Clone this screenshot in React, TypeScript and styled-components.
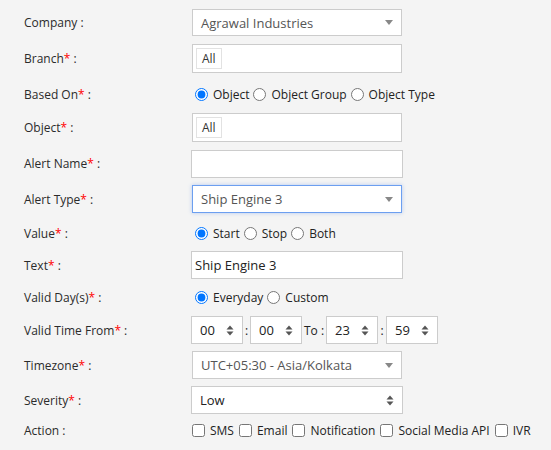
import { ReactNode } from "react";
import styled, { createGlobalStyle } from "styled-components";

const GlobalStyle = createGlobalStyle`
  html, body {
    margin: 0;
    background: #f4f4f4;
  }
  body {
    font-family: "Open Sans", "Liberation Sans", sans-serif;
    font-size: 12px;
    color: #333;
  }
`;

const Form = styled.div`
  padding: 5px 0 0 24px;
`;

const Row = styled.div<{ $h: number }>`
  display: flex;
  align-items: center;
  height: ${(p) => p.$h}px;
`;

const Label = styled.div`
  width: 168px;
  flex: none;
  color: #2b2b2b;
`;

const Req = styled.span`
  color: #f00;
`;

const Box = styled.div<{ $w?: number; $h?: number; $focus?: boolean }>`
  box-sizing: border-box;
  width: ${(p) => p.$w ?? 211}px;
  height: ${(p) => p.$h ?? 28}px;
  background: #fff;
  border: 1px solid ${(p) => (p.$focus ? "#6c9ff0" : "#cccccc")};
  box-shadow: ${(p) => (p.$focus ? "0 0 4px rgba(102, 150, 233, 0.45)" : "none")};
  display: flex;
  align-items: center;
  position: relative;
`;

const SelectText = styled.span<{ $dark?: boolean; $pad?: number }>`
  flex: 1;
  padding-left: ${(p) => p.$pad ?? 8}px;
  color: ${(p) => (p.$dark ? "#222" : "#555")};
  font-size: 13px;
`;

const InputText = styled.span`
  padding-left: 3px;
  color: #222;
  font-size: 13px;
`;

const Tag = styled.span`
  box-sizing: border-box;
  margin-left: 3px;
  height: 21px;
  padding: 0 5px;
  border: 1px solid #e2e2e2;
  display: flex;
  align-items: center;
  color: #333;
`;

const Arrow = styled.span`
  width: 20px;
  display: flex;
  justify-content: center;
  margin-right: 2px;
`;

const Options = styled.div<{ $start?: number }>`
  display: flex;
  align-items: center;
  gap: 4px;
  padding-left: ${(p) => p.$start ?? 0}px;
`;

const Option = styled.label`
  display: flex;
  align-items: center;
  color: #222;
  input {
    width: 13px;
    height: 13px;
    margin: 0 5px 0 0;
  }
`;

const Checks = styled.div`
  display: flex;
  align-items: center;
  gap: 5px;
`;

const TimeRow = styled.div`
  display: flex;
  align-items: center;
`;

const Sep = styled.span<{ $w: number }>`
  width: ${(p) => p.$w}px;
  text-align: center;
  color: #222;
`;

function DownArrow() {
  return (
    <Arrow>
      <svg width="8" height="5" viewBox="0 0 8 5">
        <path d="M0 0 H8 L4 5 Z" fill="#888" />
      </svg>
    </Arrow>
  );
}

function UpDown() {
  return (
    <Arrow>
      <svg width="8" height="11" viewBox="0 0 8 11">
        <path d="M0.5 4.5 L4 0.5 L7.5 4.5 Z" fill="#555" />
        <path d="M0.5 6.5 L4 10.5 L7.5 6.5 Z" fill="#555" />
      </svg>
    </Arrow>
  );
}

function Field({ label, req, h, children }: { label: string; req?: boolean; h: number; children?: ReactNode }) {
  return (
    <Row $h={h}>
      <Label>
        {label}
        {req && <Req>*</Req>} :
      </Label>
      {children}
    </Row>
  );
}

function Radios({ name, items, checked }: { name: string; items: string[]; checked: string }) {
  return (
    <Options $start={3}>
      {items.map((it) => (
        <Option key={it}>
          <input type="radio" name={name} defaultChecked={it === checked} />
          {it}
        </Option>
      ))}
    </Options>
  );
}

function TimeBox({ value }: { value: string }) {
  return (
    <Box $w={52}>
      <SelectText $dark $pad={8}>{value}</SelectText>
      <UpDown />
    </Box>
  );
}

export default function App() {
  return (
    <>
      <GlobalStyle />
      <Form>
        <Field label="Company" h={35}>
          <Box $w={210} $h={27}>
            <SelectText $pad={8}>Agrawal Industries</SelectText>
            <DownArrow />
          </Box>
        </Field>
        <Field label="Branch" req h={37}>
          <Box $w={210} $h={29}>
            <Tag>All</Tag>
          </Box>
        </Field>
        <Field label="Based On" req h={34}>
          <Radios name="based" items={["Object", "Object Group", "Object Type"]} checked="Object" />
        </Field>
        <Field label="Object" req h={33}>
          <Box $w={210} $h={29}>
            <Tag>All</Tag>
          </Box>
        </Field>
        <Field label="Alert Name" req h={39}>
          <Box $w={212} $h={28} style={{ marginLeft: -1 }} />
        </Field>
        <Field label="Alert Type" req h={32}>
          <Box $w={210} $h={28} $focus>
            <SelectText $pad={8}>Ship Engine 3</SelectText>
            <DownArrow />
          </Box>
        </Field>
        <Field label="Value" req h={36}>
          <Radios name="value" items={["Start", "Stop", "Both"]} checked="Start" />
        </Field>
        <Field label="Text" req h={28}>
          <Box $w={212} $h={28} style={{ marginLeft: -1 }}>
            <InputText>Ship Engine 3</InputText>
          </Box>
        </Field>
        <Field label="Valid Day(s)" req h={37}>
          <Radios name="days" items={["Everyday", "Custom"]} checked="Everyday" />
        </Field>
        <Field label="Valid Time From" req h={28}>
          <TimeRow style={{ marginLeft: -1 }}>
            <TimeBox value="00" />
            <Sep $w={7}>:</Sep>
            <TimeBox value="00" />
            <Sep $w={24}>To :</Sep>
            <TimeBox value="23" />
            <Sep $w={8}>:</Sep>
            <TimeBox value="59" />
          </TimeRow>
        </Field>
        <Field label="Timezone" req h={42}>
          <Box $w={210} $h={28}>
            <SelectText $pad={8}>UTC+05:30 - Asia/Kolkata</SelectText>
            <DownArrow />
          </Box>
        </Field>
        <Field label="Severity" req h={28}>
          <Box $w={212} $h={28} style={{ marginLeft: -1 }}>
            <SelectText $dark $pad={8}>Low</SelectText>
            <UpDown />
          </Box>
        </Field>
        <Field label="Action" h={32}>
          <Checks>
            {["SMS", "Email", "Notification", "Social Media API", "IVR"].map((c) => (
              <Option key={c}>
                <input type="checkbox" />
                {c}
              </Option>
            ))}
          </Checks>
        </Field>
      </Form>
    </>
  );
}
